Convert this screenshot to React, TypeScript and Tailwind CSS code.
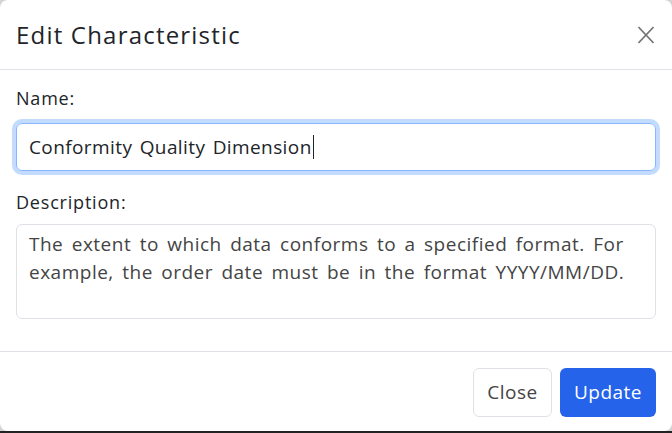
const font = { fontFamily: '"Open Sans", "Noto Sans", sans-serif' }

export default function App() {
  return (
    <div className="flex h-[433px] w-[672px] flex-col bg-[#d4d4d4]" style={font}>
      <div className="flex h-[431px] flex-col rounded-[8px] bg-white">
        {/* header */}
        <div className="flex h-[70px] shrink-0 items-center justify-between border-b border-[#dee2e6] pl-4 pr-[18px]">
          <h5 className="text-[24px] font-medium tracking-[1.2px] text-[#212529]">Edit Characteristic</h5>
          <button className="text-[#757575]">
            <svg width="16" height="18" viewBox="0 0 16 18" fill="none" stroke="currentColor" strokeWidth="1.6">
              <path d="M0.5 1L15.5 17M15.5 1L0.5 17" />
            </svg>
          </button>
        </div>

        {/* body */}
        <div className="flex h-[282px] shrink-0 flex-col border-b border-[#dee2e6] px-4">
          <label className="mt-[16px] mb-[13px] block text-[18px] leading-6 tracking-[0.8px] text-[#212529]">Name:</label>
          <div className="flex h-[48px] items-center rounded-[6px] border border-[#86b7fe] px-3 text-[19px] tracking-[0.4px] [word-spacing:2px] text-[#212529] shadow-[0_0_0_4px_rgba(13,110,253,0.25)]">
            Conformity Quality Dimension<span className="ml-px h-[24px] w-px bg-[#212529]" />
          </div>
          <label className="mt-[19px] mb-[10px] block text-[18px] leading-6 tracking-[0.8px] text-[#212529]">Description:</label>
          <div className="h-[95px] rounded-[6px] border border-[#dee2e6] px-3 pt-[5px] text-[19px] leading-[28px] tracking-[0.5px] [word-spacing:3px] text-[#444]">
            The extent to which data conforms to a specified format. For example, the order date must be in the format YYYY/MM/DD.
          </div>
        </div>

        {/* footer */}
        <div className="flex justify-end gap-2 px-4 pt-4">
          <button className="h-[49px] w-[79px] rounded-[6px] border border-[#dee2e6] text-[19px] tracking-[0.5px] text-[#444]">Close</button>
          <button className="h-[49px] w-[96px] rounded-[6px] bg-[#2563eb] text-[19px] tracking-[0.5px] text-white">Update</button>
        </div>
      </div>
      <div className="h-[2px] bg-[#222]" />
    </div>
  )
}
